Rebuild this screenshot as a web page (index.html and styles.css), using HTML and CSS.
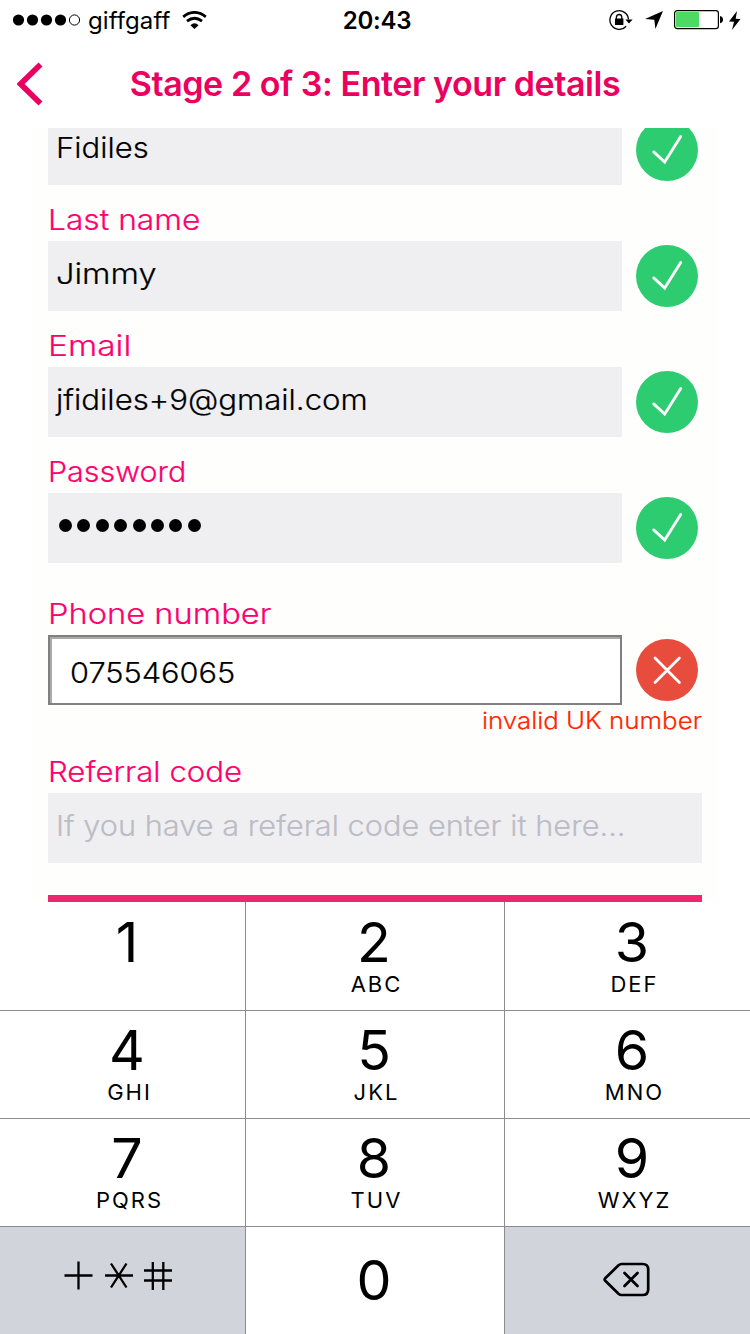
FILE: index.html
```html
<!DOCTYPE html>
<html lang="en">
<head>
<meta charset="utf-8">
<title>Enter your details</title>
<link rel="stylesheet" href="styles.css">
</head>
<body>
<svg class="defs" width="0" height="0">
  <symbol id="ok" viewBox="0 0 62 62"><circle cx="31" cy="31" r="31" fill="#2ecc71"/><path d="M17.7 32.9 28.700 43 44.700 17.500" fill="none" stroke="#fff" stroke-width="2.8" stroke-linecap="round"/></symbol>
</svg>
<header class="status">
  <div class="status-left">
    <svg width="68" height="12" viewBox="0 0 68 12"><circle cx="5.500" cy="6" r="5.600"/><circle cx="19.500" cy="6" r="5.600"/><circle cx="33.500" cy="6" r="5.600"/><circle cx="47.500" cy="6" r="5.600"/><circle cx="61.500" cy="6" r="5.100" fill="none" stroke="#000"/></svg>
    <span class="carrier">giffgaff</span>
    <svg class="wifi" width="25" height="18" viewBox="0 0 25 18" fill="none" stroke="#000" stroke-width="2.8"><path d="M1.2 5.8Q12.5-3 23.8 5.8M5 10.2Q12.5 4.3 20 10.2"/><path d="M8.4 14.2Q12.5 10.5 16.6 14.2L12.5 18Z" fill="#000" stroke="none"/></svg>
  </div>
  <span class="clock">20:43</span>
  <div class="status-right">
    <svg width="24" height="20" viewBox="0 0 24 20"><path d="M17.2 16.200A9.300 9.300 0 1 1 19.500 9.500" fill="none" stroke="#000" stroke-width="1.3"/><path d="M16.400 9.500h7.200L20 13.500z"/><rect x="6" y="8.5" width="8.4" height="6.5"/><path d="M7.4 9V7.2a2.7 2.7 0 0 1 5.4 0V9" fill="none" stroke="#000" stroke-width="1.3"/></svg>
    <svg class="location" width="18" height="18" viewBox="0 0 18 18"><path d="M18 0 10.4 18 9.3 8.8 0 8z"/></svg>
    <svg class="battery" width="49" height="20" viewBox="0 0 49 20"><rect x=".6" y=".6" width="43.8" height="18" rx="2.6" fill="#fff" stroke="#000" stroke-width="1.2"/><rect x="2" y="2" width="23" height="15" rx="1" fill="#4cd964"/><path d="M46 6q3 .5 3 3.6t-3 3.6z"/></svg>
    <svg class="bolt" width="12" height="19" viewBox="0 0 12 19"><path d="M8 0 0 10.6 5 10.8 3 19 11.5 8 6.7 7.8z"/></svg>
  </div>
</header>
<nav class="nav">
  <svg class="back" width="26" height="44" viewBox="0 0 26 44"><path d="M23.5 2.5 3.6 22 23.5 41.5" fill="none" stroke="#eb0060" stroke-width="5.6"/></svg>
  <h1 class="title">Stage 2 of 3: Enter your details</h1>
</nav>
<main class="form">
  <div class="row row-first"><div class="field"><span class="wide t-first">Fidiles</span></div><svg class="mark"><use href="#ok"/></svg></div>
  <div class="label"><span class="wide t-label-last">Last name</span></div>
  <div class="row"><div class="field"><span class="wide t-last">Jimmy</span></div><svg class="mark"><use href="#ok"/></svg></div>
  <div class="label"><span class="wide t-label-email">Email</span></div>
  <div class="row"><div class="field"><span class="wide t-email">jfidiles+9@gmail.com</span></div><svg class="mark"><use href="#ok"/></svg></div>
  <div class="label"><span class="wide t-label-password">Password</span></div>
  <div class="row"><div class="field dots"><i></i><i></i><i></i><i></i><i></i><i></i><i></i><i></i></div><svg class="mark"><use href="#ok"/></svg></div>
  <div class="label label-phone"><span class="wide t-label-phone">Phone number</span></div>
  <div class="row"><div class="field field-active"><span class="wide t-phone">075546065</span></div>
    <svg class="mark" viewBox="0 0 62 62"><circle cx="31" cy="31" r="31" fill="#e84c3d"/><path d="m19 19 24.4 24.4M43.4 19 19 43.4" stroke="#fff" stroke-width="2.8" stroke-linecap="round"/></svg></div>
  <div class="error"><span class="wide t-error">invalid UK number</span></div>
  <div class="label"><span class="wide t-label-code">Referral code</span></div>
  <div class="row"><div class="field placeholder"><span class="wide t-code">If you have a referal code enter it here...</span></div></div>
  <div class="button-edge"></div>
</main>
<section class="keypad">
  <div class="key key-top"><b>1</b></div><div class="key key-top"><b>2</b><small>ABC</small></div><div class="key key-top"><b>3</b><small>DEF</small></div>
  <div class="key"><b>4</b><small>GHI</small></div><div class="key"><b>5</b><small>JKL</small></div><div class="key"><b>6</b><small>MNO</small></div>
  <div class="key"><b>7</b><small>PQRS</small></div><div class="key"><b>8</b><small>TUV</small></div><div class="key"><b>9</b><small>WXYZ</small></div>
  <div class="key key-symbols"><svg width="110" height="30" viewBox="0 0 110 30" fill="none" stroke="#000" stroke-width="2.3"><path d="M.5 14.5h28M14.5.5v28M41 14.5h28M47 2.5l15.5 24M62.5 2.5 47 26.500M80 9.500h28M80 19.500h28M88.800 1v28M99.300 1v28"/></svg></div>
  <div class="key key-zero"><b>0</b></div>
  <div class="key key-delete"><svg width="47" height="35" viewBox="0 0 47 35" fill="none" stroke="#000" stroke-width="2.700" stroke-linejoin="round" stroke-linecap="round"><path d="M18.500 2H39.500Q45.200 2 45.200 7.500V27.500Q45.200 33 39.500 33H18.500Q17 33 15.500 31.700L2 18.500Q1.200 17.500 2 16.500L15.500 3.300Q17 2 18.500 2ZM21.500 11l13 13M34.500 11l-13 13"/></svg></div>
</section>
</body>
</html>
```
FILE: styles.css
```css
* { box-sizing: border-box; }
body { margin: 0; width: 750px; height: 1334px; overflow: hidden; background: #fff; color: #000; font-family: Inter, "Liberation Sans", sans-serif; display: flex; flex-direction: column; }
svg { display: block; flex: none; }
.defs { position: absolute; }
.status { height: 40px; flex: none; display: grid; grid-template-columns: 1fr auto 1fr; align-items: center; padding: 0 9px 0 13px; }
.status-left, .status-right { display: flex; align-items: center; }
.status-right { justify-content: flex-end; }
.carrier { font-size: 24px; margin-left: 7px; letter-spacing: .1px; line-height: 38px; padding-top: 2px; }
.wifi { margin-left: 12px; }
.clock { font-size: 24px; font-weight: 600; letter-spacing: -.2px; line-height: 38px; padding-top: 2px; }
.location { margin-left: 12px; }
.battery { margin-left: 11px; }
.bolt { margin-left: 6px; }
.nav { height: 88px; flex: none; display: grid; grid-template-columns: 26px 1fr 26px; align-items: center; padding: 0 17px; }
.title { margin: 0; text-align: center; white-space: nowrap; font-size: 34px; font-weight: 600; line-height: 88px; color: #eb0060; letter-spacing: -.45px; }
.form { height: 774px; flex: none; overflow: hidden; margin: 0 32px; padding: 0 16px; background: #fefefc; font-weight: 300; font-size: 29px; }
.row { display: flex; height: 70px; gap: 14px; align-items: center; }
.row-first { margin-top: -13px; }
.field { flex: 1; height: 70px; background: #efeff2; padding: 0 8px; line-height: 65px; white-space: nowrap; }
.mark { width: 62px; height: 62px; margin-right: 4px; }
.label { height: 56px; padding-top: 15px; line-height: 40px; color: #ff006e; white-space: nowrap; }
.label-phone { height: 72px; padding-top: 31px; }
.field-active { background: #fff; border: 2px solid #808080; box-shadow: inset 2px 2px 0 #aaa; padding: 0 20px; line-height: 71px; }
.wide { display: inline-block; transform-origin: left center; -webkit-text-stroke: .2px currentColor; }
.t-first { transform: scaleX(1.07); }
.t-label-last { transform: scaleX(1.095); }
.t-last { transform: scaleX(1.125); }
.t-label-email { transform: scaleX(1.155); }
.t-email { transform: scaleX(1.075); }
.t-label-password { transform: scaleX(1.05); }
.t-label-phone { transform: scaleX(1.125); }
.t-phone { transform: scaleX(1.06); }
.t-label-code { transform: scaleX(1.075); }
.t-code { transform: scaleX(1.06); }
.t-error { transform: scaleX(1.1); transform-origin: right center; }
.dots { display: flex; align-items: center; gap: 5.4px; padding: 0 0 6px 11px; }
.dots i { width: 13px; height: 13px; border-radius: 50%; background: #000; }
.error { height: 32px; line-height: 32px; text-align: right; font-size: 23.500px; color: #ff2600; }
.placeholder { color: #bcbcc5; }
.button-edge { height: 7px; margin-top: 32px; background: #f0266c; }
.keypad { height: 432px; flex: none; display: grid; grid-template-columns: 245px 258px 245px; grid-template-rows: 108px 107px 107px 107px; gap: 1px; background: #8c8c8c; }
.key { background: #fff; display: flex; flex-direction: column; align-items: center; padding: 7px 0 0 11px; }
.key-top { padding-top: 8px; }
.key:nth-child(3n+2) { padding-left: 0; }
.key b { font-size: 55.500px; font-weight: 400; line-height: 64px; margin-right: 2px; }
.key small { font-size: 22px; line-height: 20px; letter-spacing: 2px; padding-left: 3px; }
.key.key-symbols { padding: 34px 8px 0 0; }
.key.key-delete { padding: 35px 3px 0 0; }
.key.key-zero { padding-top: 21px; }
.key-symbols, .key-delete { background: #d1d4db; }
```
